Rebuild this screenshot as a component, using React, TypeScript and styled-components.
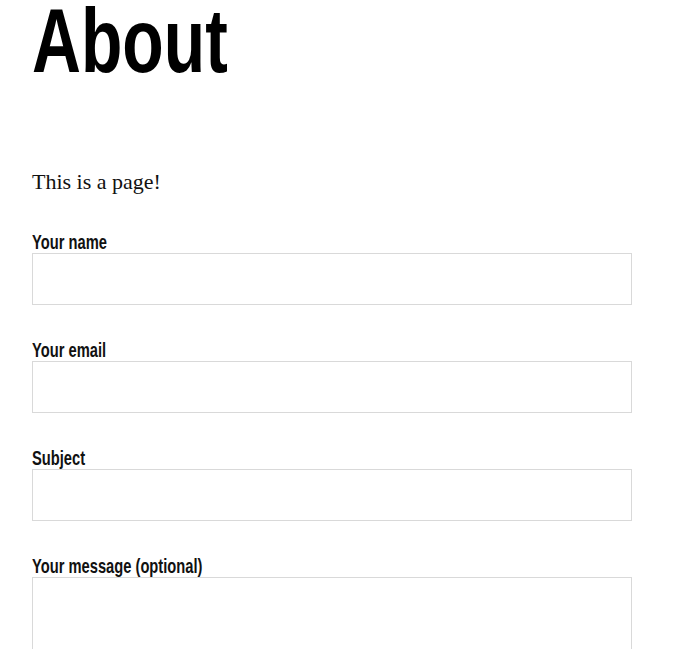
import React from 'react';

import styled, { createGlobalStyle } from 'styled-components';

const GlobalStyle = createGlobalStyle`
  html, body {
    margin: 0;
    padding: 0;
    background: #fff;
  }
`;

const fields = [
  { id: 'name', label: 'Your name' },
  { id: 'email', label: 'Your email' },
  { id: 'subject', label: 'Subject' },
];

export default function App() {
  return (
    <>
      <GlobalStyle />
      <Page>
        <Title>About</Title>
        <Intro>This is a page!</Intro>

        <Form onSubmit={(e) => e.preventDefault()}>
          {fields.map(({ id, label }) => (
            <Field key={id}>
              <Label htmlFor={id}>{label}</Label>
              <Input id={id} type="text" />
            </Field>
          ))}

          <Field>
            <Label htmlFor="message">Your message (optional)</Label>
            <TextArea id="message" rows={6} />
          </Field>
        </Form>
      </Page>
    </>
  );
}

// no condensed display face is installed, so squeeze Liberation Sans
const Page = styled.main`
  padding: 0 32px;
  width: 600px;
`;

const Title = styled.h1`
  margin: 0;
  padding-top: 2px;
  font-family: 'Liberation Sans', sans-serif;
  font-weight: 700;
  font-size: 91px;
  line-height: 78px;
  color: #000;
  transform: scaleX(0.745);
  transform-origin: left center;
`;

const Intro = styled.p`
  margin: 89px 0 0;
  font-family: 'Liberation Serif', serif;
  font-size: 22px;
  line-height: 26px;
  color: #111;
`;

const Form = styled.form`
  display: flex;
  flex-direction: column;
  gap: 35px;
  margin-top: 37px;
`;

const Field = styled.div`
  display: flex;
  flex-direction: column;
  align-items: flex-start;
`;

const Label = styled.label`
  display: block;
  margin-bottom: 2px;
  font-family: 'Liberation Sans', sans-serif;
  font-weight: 700;
  font-size: 21px;
  line-height: 19px;
  color: #111;
  white-space: nowrap;
  transform: scaleX(0.7);
  transform-origin: left center;
`;

const Input = styled.input`
  box-sizing: border-box;
  width: 600px;
  height: 52px;
  margin: 0;
  padding: 0 12px;
  border: 1px solid #d9d9d9;
  border-radius: 0;
  background: #fff;
  font-family: 'Liberation Sans', sans-serif;
  font-size: 16px;
  outline: none;
`;

const TextArea = styled.textarea`
  box-sizing: border-box;
  width: 600px;
  height: 150px;
  margin: 0;
  padding: 12px;
  border: 1px solid #d9d9d9;
  border-radius: 0;
  background: #fff;
  font-family: 'Liberation Sans', sans-serif;
  font-size: 16px;
  resize: vertical;
  outline: none;
`;
